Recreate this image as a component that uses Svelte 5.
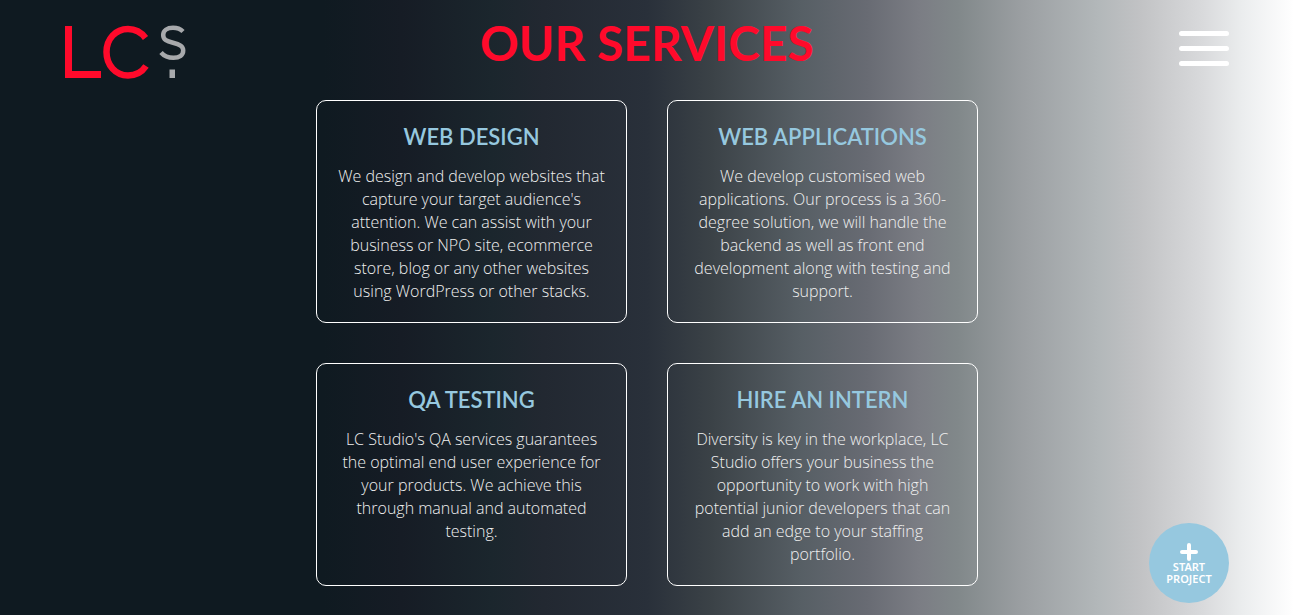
<script>
  const services = [
    { title: 'Web Design', text: "We design and develop websites that capture your target audience's attention. We can assist with your business or NPO site, ecommerce store, blog or any other websites using WordPress or other stacks." },
    { title: 'Web Applications', text: 'We develop customised web applications. Our process is a 360-degree solution, we will handle the backend as well as front end development along with testing and support.' },
    { title: 'QA Testing', text: "LC Studio's QA services guarantees the optimal end user experience for your products. We achieve this through manual and automated testing." },
    { title: 'Hire an Intern', text: 'Diversity is key in the workplace, LC Studio offers your business the opportunity to work with high potential junior developers that can add an edge to your staffing portfolio.' }
  ];
</script>

<div class="page">
  <header>
    <a class="logo" href="#home" aria-label="LC Studio home">
      <svg width="122" height="54" viewBox="0 0 122 54" fill="none" aria-hidden="true">
        <path d="M3.500 1V49.500H36" stroke="#ff0a2b" stroke-width="7" />
        <path d="M80.500 13C76 7 70 4 63 4C50.500 4 41.500 14 41.500 27S50.500 50.500 63 50.500C70.500 50.500 77 47 81 41" stroke="#ff0a2b" stroke-width="6.500" />
        <path d="M118 6.500C115.500 4 112.500 2.800 108 2.800C102 2.800 98.200 5.800 98.200 10C98.200 15 102 16.300 108 17.800C114.500 19.500 118.200 21 118.200 25.500C118.200 30 114.500 32.800 108.500 32.800C103 32.800 99 31 96 27.500" stroke="#a7a9ac" stroke-width="4.500" />
        <path d="M104.500 44.500H110V53H104.500Z" fill="#a7a9ac" />
      </svg>
    </a>
    <button class="menu" aria-label="Open menu"><span></span><span></span><span></span></button>
  </header>

  <main>
    <h1>Our Services</h1>
    <div class="grid">
      {#each services as service}
        <article>
          <h2>{service.title}</h2>
          <p>{service.text}</p>
        </article>
      {/each}
    </div>
  </main>

  <a class="start" href="#start">
    <svg width="18" height="18" viewBox="0 0 18 18" aria-hidden="true">
      <path d="M9 2V16M2 9H16" stroke="#fff" stroke-width="4" stroke-linecap="round" />
    </svg>
    <span>START<br />PROJECT</span>
  </a>
</div>

<style>
  :global(body) { margin: 0; }
  .page {
    box-sizing: border-box;
    min-height: 100vh;
    padding: 15px 64px 29px;
    font-family: 'Open Sans', sans-serif;
    background: linear-gradient(90deg, #0f1a21 0%, #0f1a21 25%, #161c25 31%, #1b262d 38%, #222831 42%, #29303a 50%, #3b4247 55%, #575f65 62%, #686b73 67%, #7b7d84 71%, #81888a 74%, #9b9fa2 79%, #b3b8ba 85%, #c1c2c4 88%, #d9dadc 93%, #ebedee 96%, #fff 100%);
  }
  header {
    position: absolute;
    top: 25px;
    left: 65px;
    right: 65px;
    display: flex;
    justify-content: space-between;
    align-items: flex-start;
  }
  .logo, .logo svg { display: block; }
  .menu {
    display: flex;
    flex-direction: column;
    gap: 10px;
    width: 50px;
    margin: 6px 0 0;
    padding: 0;
    border: 0;
    background: none;
    cursor: pointer;
  }
  .menu span { height: 5px; border-radius: 3px; background: #fff; }
  h1 {
    margin: 0 0 29px;
    font: 700 48px/56px Lato, sans-serif;
    text-align: center;
    text-transform: uppercase;
    color: #ff0a2b;
  }
  .grid {
    display: grid;
    grid-template-columns: 1fr 1fr;
    gap: 40px;
    max-width: 662px;
    margin: 0 auto;
  }
  article {
    padding: 20px 20px 19px;
    border: 1px solid #fff;
    border-radius: 10px;
    text-align: center;
  }
  h2 {
    margin: 0 0 13px;
    font: 600 22px/31px Lato, sans-serif;
    text-transform: uppercase;
    color: #96c8df;
  }
  p {
    margin: 0;
    font-size: 16px;
    line-height: 23px;
    font-weight: 300;
    color: #f0f0f0;
  }
  .start {
    position: fixed;
    right: 65px;
    bottom: 12px;
    display: flex;
    flex-direction: column;
    align-items: center;
    justify-content: center;
    box-sizing: border-box;
    width: 80px;
    height: 80px;
    padding-top: 2px;
    border-radius: 50%;
    background: #96c8df;
    color: #fff;
    font: 600 11px/12px 'Noto Sans', sans-serif;
    text-align: center;
    text-decoration: none;
  }
  @media (max-width: 760px) {
    .grid { grid-template-columns: 1fr; }
    main { padding-top: 80px; }
  }
</style>
